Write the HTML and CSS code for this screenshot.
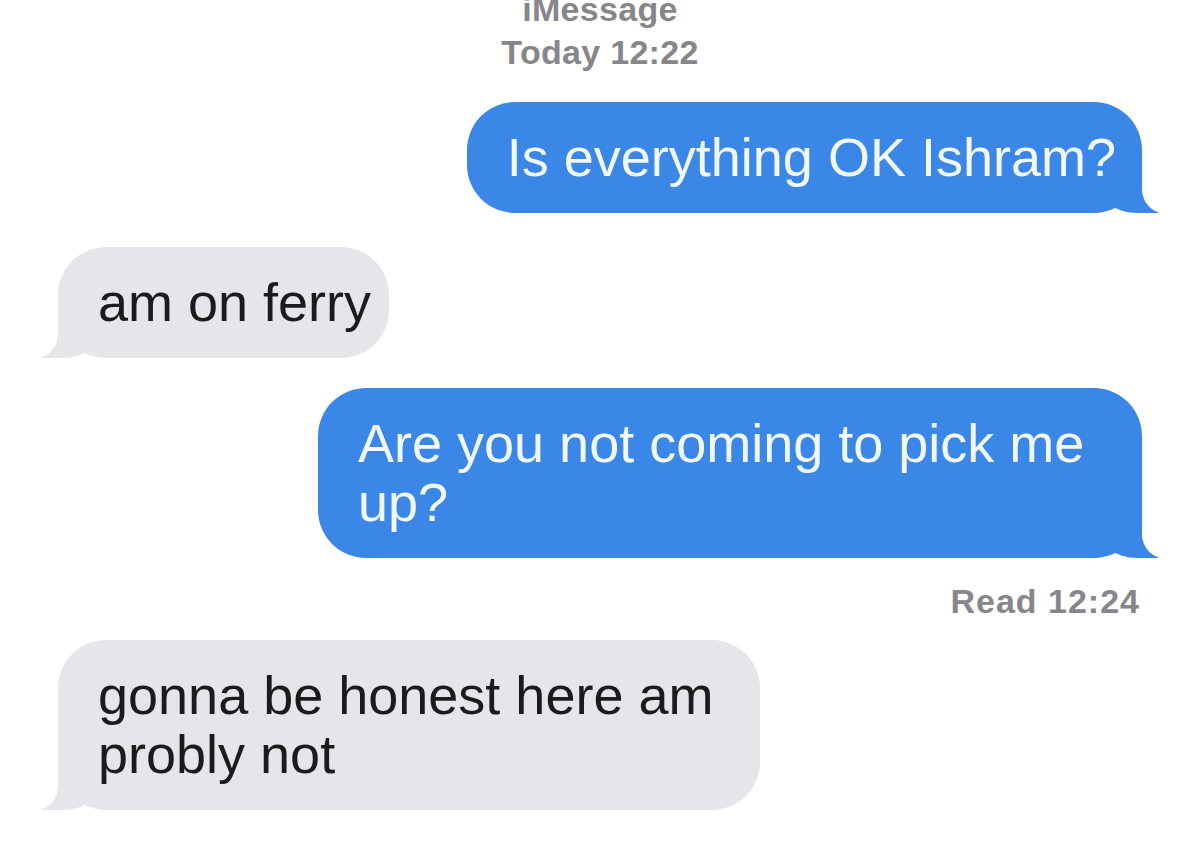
FILE: index.html
```html
<!DOCTYPE html>
<html lang="en">
<head>
<meta charset="utf-8">
<title>iMessage</title>
<link rel="stylesheet" href="styles.css">
</head>
<body>
<div class="screen">
  <header class="thread-head">
    <div class="service">iMessage</div>
    <div class="stamp">Today 12:22</div>
  </header>
  <main class="thread">
    <div class="msg out m1"><span class="msg-text">Is everything OK Ishram?</span></div>
    <div class="msg in m2"><span class="msg-text">am on ferry</span></div>
    <div class="msg out m3"><span class="msg-text">Are you not coming to pick me up?</span></div>
    <div class="receipt">Read 12:24</div>
    <div class="msg in m4"><span class="msg-text">gonna be honest here am probly not</span></div>
  </main>
</div>
</body>
</html>
```
FILE: styles.css
```css
html, body {
  margin: 0;
  padding: 0;
  background: #ffffff;
}

body {
  font-family: "Liberation Sans", Arial, Helvetica, sans-serif;
  overflow: hidden;
}

.screen {
  width: 1200px;
  height: 847px;
  overflow: hidden;
  display: flex;
  flex-direction: column;
}

.thread-head {
  display: flex;
  flex-direction: column;
  align-items: center;
  margin-top: -12px;
  color: #87878b;
  font-weight: 700;
  font-size: 34px;
  line-height: 43px;
  letter-spacing: 0.3px;
}

.thread {
  display: flex;
  flex-direction: column;
  padding: 0 58px;
  margin-top: 28px;
}

.msg {
  position: relative;
  isolation: isolate;
  box-sizing: border-box;
  font-size: 54px;
  line-height: 59px;
  border-radius: 48px;
}

.msg-text {
  position: relative;
  z-index: 2;
}

.out {
  align-self: flex-end;
  background: #3b87e7;
  color: #f1f8fe;
  max-width: 824px;
  padding: 26px 26px 26px 40px;
}

.in {
  align-self: flex-start;
  background: #e5e5ea;
  color: #1b1b1d;
  max-width: 702px;
  padding: 26px 18px 26px 40px;
}

.msg::before,
.msg::after {
  content: "";
  position: absolute;
  bottom: 0;
  height: 52px;
}

.msg::before {
  z-index: 0;
  width: 64px;
}

.msg::after {
  z-index: 1;
  width: 22px;
  background: #ffffff;
}

.out::before {
  right: -16px;
  background: #3b87e7;
  border-bottom-left-radius: 44px 34px;
}

.out::after {
  right: -22px;
  border-bottom-left-radius: 22px 24px;
}

.in::before {
  left: -16px;
  background: #e5e5ea;
  border-bottom-right-radius: 44px 34px;
}

.in::after {
  left: -22px;
  border-bottom-right-radius: 22px 24px;
}

.m2 {
  margin-top: 34px;
}

.m3 {
  margin-top: 30px;
}

.receipt {
  align-self: flex-end;
  margin-top: 23px;
  padding-right: 2px;
  color: #87878b;
  font-weight: 700;
  font-size: 34px;
  line-height: 40px;
  letter-spacing: 1px;
}

.m4 {
  margin-top: 19px;
}
```
